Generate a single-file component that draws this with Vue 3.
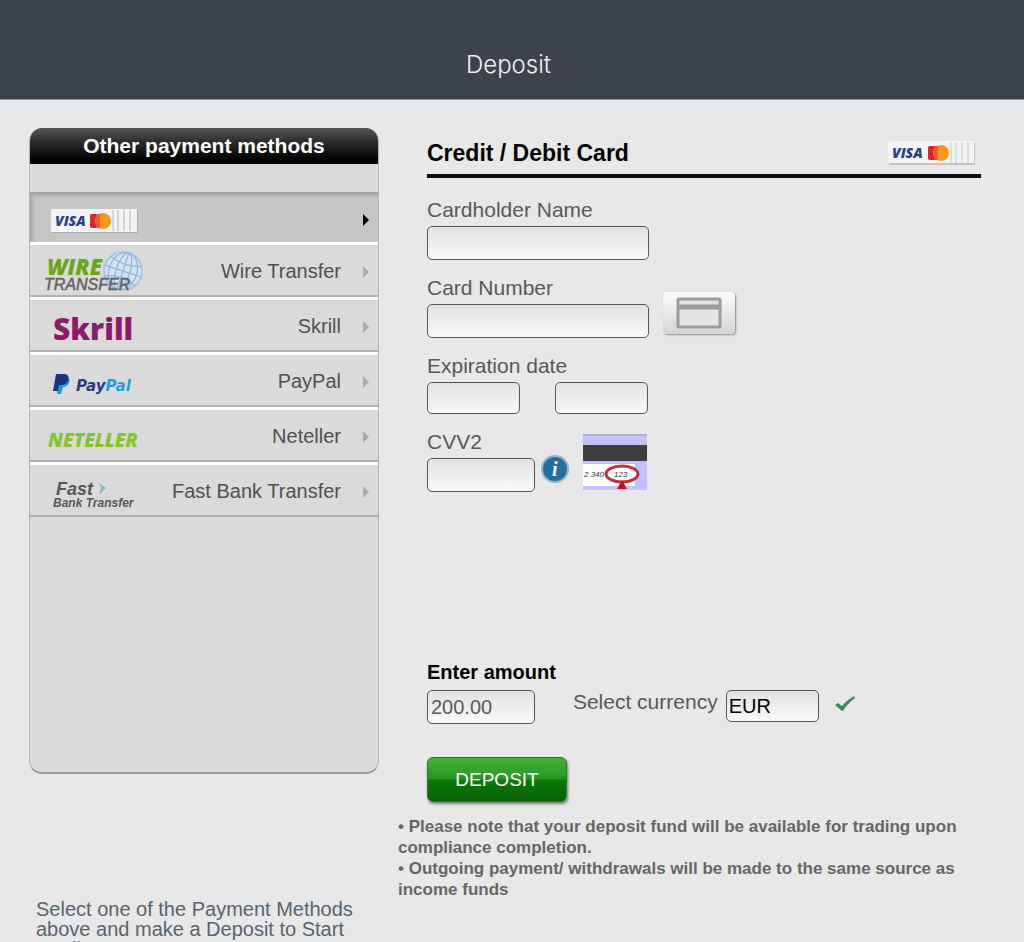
<template>
  <div class="deposit-page">
    <header class="top-bar">
      <h1>Deposit</h1>
    </header>

    <div class="content">
      <aside class="sidebar">
        <nav class="methods" aria-label="Other payment methods">
          <h2>Other payment methods</h2>
          <ul>
            <li v-for="m in methods" :key="m.id">
              <button
                type="button"
                class="method"
                :class="{ active: m.id === selected }"
                :aria-label="m.name"
                @click="selected = m.id"
              >
                <!-- Visa / Mastercard -->
                <svg v-if="m.id === 'card'" class="logo" width="106" height="44" viewBox="0 0 106 44">
                  <rect x="8" y="12" width="86" height="23" rx="1" fill="#8c8c8c" opacity=".5" />
                  <rect x="7" y="11" width="86" height="23" rx="1" fill="#f3f4f6" />
                  <text x="11" y="28" class="visa">VISA</text>
                  <rect x="46" y="16" width="9" height="14" rx="2" fill="#e3202c" />
                  <circle cx="59" cy="23" r="8" fill="#f7981d" />
                  <path d="M52 16h4v14h-4z" fill="#ee5a25" />
                  <path d="M69 12v21M74 12v21M80 12v21M86 12v21" stroke="#d6d6d6" stroke-width="2" />
                </svg>

                <svg v-else-if="m.id === 'wire'" class="logo" width="106" height="44" viewBox="0 0 106 44">
                  <circle cx="79" cy="21" r="19" fill="#d3e2f3" stroke="#a9c6e6" stroke-width="2" />
                  <g fill="none" stroke="#8fb5de" stroke-width="1.3" transform="rotate(18 79 21)">
                    <ellipse cx="79" cy="21" rx="7" ry="19" />
                    <ellipse cx="79" cy="21" rx="14" ry="19" />
                    <path d="M79 2v38M60 21h38M63 11q16 6 32 0M63 31q16-6 32 0" />
                  </g>
                  <text x="3" y="25" class="wire">WIRE</text>
                  <text x="0" y="40" class="wire-sub">TRANSFER</text>
                </svg>

                <svg v-else-if="m.id === 'skrill'" class="logo" width="106" height="44" viewBox="0 0 106 44">
                  <text x="9" y="35" class="skrill">Skrill</text>
                </svg>

                <svg v-else-if="m.id === 'paypal'" class="logo" width="106" height="44" viewBox="0 0 106 44">
                  <path d="M15 17h8q4 1 2 6-2 4-6 4l-2 7h-4z" fill="#1b9ad6" />
                  <path d="M12 14h9q5 1 3 7-2 4-7 4h-2l-1 6H9z" fill="#1c3580" />
                  <text x="32" y="31" class="paypal"><tspan fill="#263c86">Pay</tspan><tspan fill="#229ed8">Pal</tspan></text>
                </svg>

                <svg v-else-if="m.id === 'neteller'" class="logo" width="106" height="44" viewBox="0 0 106 44">
                  <text x="4" y="32" class="neteller">NETELLER</text>
                </svg>

                <svg v-else class="logo" width="106" height="44" viewBox="0 0 106 44">
                  <path d="M55 13l7 5-7 7 2-7z" fill="#8fb6c0" />
                  <text x="12" y="25" class="fast">Fast</text>
                  <text x="9" y="37" class="fast-sub">Bank Transfer</text>
                </svg>

                <span class="name">{{ m.label }}</span>
                <svg class="arrow" width="8" height="12" viewBox="0 0 8 12"><path d="M1 0l6 6-6 6z" /></svg>
              </button>
            </li>
          </ul>
        </nav>
        <p class="hint">Select one of the Payment Methods above and make a Deposit to Start Trading</p>
      </aside>

      <main class="main">
        <form class="form" @submit.prevent>
          <div class="form-title">
            <h2>Credit / Debit Card</h2>
            <svg width="90" height="26" viewBox="0 0 90 26" role="img" aria-label="Visa, Mastercard">
              <rect x="1" y="3" width="86" height="22" rx="1" fill="#c4c4c4" />
              <rect x="0" y="1" width="86" height="22" rx="1" fill="#f3f4f6" />
              <text x="4" y="18" class="visa">VISA</text>
              <rect x="40" y="6" width="9" height="14" rx="2" fill="#e3202c" />
              <circle cx="53" cy="13" r="8" fill="#f7981d" />
              <path d="M46 6h4v14h-4z" fill="#ee5a25" />
              <path d="M63 2v21M68 2v21M74 2v21M80 2v21" stroke="#dedede" stroke-width="2" />
            </svg>
          </div>

          <div class="field">
            <label for="holder">Cardholder Name</label>
            <input id="holder" v-model="form.holder" type="text" class="wide" />
          </div>

          <div class="row">
            <div class="field">
              <label for="number">Card Number</label>
              <input id="number" v-model="form.number" type="text" class="wide" />
            </div>
            <button type="button" class="card-btn" aria-label="Card">
              <svg width="46" height="32" viewBox="0 0 46 32">
                <rect x="2" y="2" width="42" height="28" rx="1" fill="#e4e4e4" stroke="#9b9b9b" stroke-width="3" />
                <path d="M2 10h42" stroke="#9b9b9b" stroke-width="5" />
              </svg>
            </button>
          </div>

          <div class="field">
            <label for="month">Expiration date</label>
            <div class="dates">
              <select id="month" v-model="form.month">
                <option value=""></option>
                <option v-for="n in 12" :key="n">{{ n }}</option>
              </select>
              <select v-model="form.year" aria-label="Expiration year">
                <option value=""></option>
                <option v-for="n in 10" :key="n">{{ 2019 + n }}</option>
              </select>
            </div>
          </div>

          <div class="row">
            <div class="field">
              <label for="cvv">CVV2</label>
              <input id="cvv" v-model="form.cvv" type="text" class="short" />
            </div>
            <svg class="info" width="28" height="28" viewBox="0 0 28 28">
              <circle cx="14" cy="14" r="13" fill="#246f9f" stroke="#8fb5cc" stroke-width="2" />
              <text x="11" y="21" class="info-text">i</text>
            </svg>
            <svg class="card-back" width="64" height="56" viewBox="0 0 64 56">
              <rect width="64" height="56" fill="#c3c1fb" />
              <path d="M0 0h64v2H0z" fill="#aeb0d2" />
              <path d="M0 11h64v16H0z" fill="#3b3c3e" />
              <path d="M0 30h52v22H0z" fill="#fff" />
              <text x="1" y="43" class="digits">2 340</text>
              <ellipse cx="39" cy="40" rx="16" ry="8" fill="#fff" stroke="#c22f3f" stroke-width="3" />
              <text x="31" y="43" class="digits">123</text>
              <path d="M39 46l5 9H34z" fill="#c11222" />
            </svg>
          </div>

          <div class="row amount-row">
            <div class="field">
              <label for="amount" class="strong">Enter amount</label>
              <input id="amount" v-model="form.amount" type="text" class="short" />
            </div>
            <div class="currency">
              <label for="currency">Select currency</label>
              <select id="currency" v-model="form.currency">
                <option>EUR</option>
                <option>USD</option>
                <option>GBP</option>
              </select>
              <svg class="check" width="20" height="16" viewBox="0 0 20 16">
                <path d="M0 9l3-2 4 3Q12 4 19 0l1 2Q12 8 8 15H7z" fill="#3d8a58" />
              </svg>
            </div>
          </div>

          <button type="submit" class="submit">DEPOSIT</button>
        </form>

        <div class="notes">
          <p>• Please note that your deposit fund will be available for trading upon compliance completion.</p>
          <p>• Outgoing payment/ withdrawals will be made to the same source as income funds</p>
        </div>
      </main>
    </div>
  </div>
</template>

<script setup>
import { ref, reactive } from 'vue'

const methods = [
  { id: 'card', name: 'Credit / Debit Card', label: '' },
  { id: 'wire', name: 'Wire Transfer', label: 'Wire Transfer' },
  { id: 'skrill', name: 'Skrill', label: 'Skrill' },
  { id: 'paypal', name: 'PayPal', label: 'PayPal' },
  { id: 'neteller', name: 'Neteller', label: 'Neteller' },
  { id: 'fast', name: 'Fast Bank Transfer', label: 'Fast Bank Transfer' },
]

const selected = ref('card')

const form = reactive({
  holder: '',
  number: '',
  month: '',
  year: '',
  cvv: '',
  amount: '200.00',
  currency: 'EUR',
})
</script>

<style>
body { margin: 0; background: #e8e8e8; }
</style>

<style scoped>
.deposit-page { font-family: "Liberation Sans", Arial, sans-serif; color: #58585a; background: #e8e8e8; }
h1, h2, p, ul { margin: 0; padding: 0; }
button, input, select { font-family: inherit; box-sizing: border-box; margin: 0; }

.top-bar {
  box-sizing: border-box; height: 100px; padding: 30px 7px 0 0;
  display: flex; align-items: center; justify-content: center;
  background: #3c434b; border-bottom: 1px solid #8d9095;
}
.top-bar h1 { font-family: Inter, sans-serif; font-size: 24px; line-height: 28px; font-weight: 300; color: #f0f1f2; }

.content {
  display: flex; align-items: flex-start; gap: 19px;
  padding: 28px 43px 0 29px;
  background: linear-gradient(#e5e8ed 10px, #e8e8e8 20px);
}

/* sidebar */
.sidebar { flex: 0 0 350px; }
.methods {
  box-sizing: border-box; min-height: 646px; overflow: hidden;
  background: #dadada; border: 1px solid #b4b4b4; border-bottom: 2px solid #999; border-top: 0; border-radius: 13px;
}
.methods h2 {
  height: 36px; margin-bottom: 28px;
  font-size: 21px; line-height: 36px; color: #fff; text-align: center;
  background: linear-gradient(#555, #2b2b2b 40%, #000 90%);
}
.methods ul { list-style: none; }
.method {
  width: 100%; height: 55px; padding: 4px 8px 0 14px;
  display: flex; align-items: center;
  background: #dadada; border: 0; border-top: 3px solid #fff; border-bottom: 2px solid #b0b0b0;
  color: #505052; font-size: 20px; cursor: pointer;
}
.method.active {
  height: 50px; background: #c6c6c6; border-top: 2px solid #a3a3a3; border-bottom: 0;
  box-shadow: inset 4px 3px 3px -1px #adadad;
}
.logo { flex: none; overflow: visible; }
.name { flex: 1; text-align: right; line-height: 24px; padding-bottom: 2px; }
.arrow { flex: none; margin-left: 21px; fill: #aaa; }
.active .arrow { fill: #000; }

.visa { font: italic 800 14px "Open Sans", sans-serif; fill: #2b3f88; }
.wire { font: italic 800 22px "Open Sans", sans-serif; fill: #69a61c; }
.wire-sub { font: italic 16px "Liberation Sans", sans-serif; fill: #606366; stroke: #606366; stroke-width: .5; }
.skrill { font: 800 30px "Open Sans", sans-serif; fill: #8f1a6b; }
.paypal { font: italic 700 15px "DejaVu Sans", sans-serif; }
.neteller { font: italic 800 19px "Open Sans", sans-serif; fill: #86c52f; }
.fast { font: italic 700 18px "Liberation Sans", sans-serif; fill: #55585a; }
.fast-sub { font: italic 700 12px "Liberation Sans", sans-serif; fill: #55585a; }

.hint { margin-top: 125px; padding: 0 7px; font-size: 20px; line-height: 20px; color: #56646f; }

/* form */
.main { flex: 1; min-width: 0; }
.form { padding-left: 29px; }
.form-title {
  display: flex; align-items: center; justify-content: space-between;
  box-sizing: border-box; height: 50px; padding: 4px 3px 0 0; margin-bottom: 20px;
  border-bottom: 4px solid #111;
}
.form-title h2 { font-size: 23px; line-height: 28px; color: #000; }

.row { display: flex; align-items: flex-end; }
.field { display: flex; flex-direction: column; margin-bottom: 16px; }
label { font-size: 21px; line-height: 24px; margin-bottom: 4px; }
.strong { font-size: 20px; line-height: 20px; margin-bottom: 8px; font-weight: 700; color: #000; }
input, select {
  height: 34px; padding: 0 3px; font-size: 20px; color: #5a5a5a;
  border: 1px solid #555; border-radius: 5px; background: linear-gradient(#e2e2e2, #f9f9f9);
}
select { appearance: none; width: 93px; height: 32px; padding: 0 2px; color: #000; }
.wide { width: 222px; }
.short { width: 108px; }
.dates { display: flex; gap: 35px; }

.card-btn {
  display: flex; align-items: center; justify-content: center;
  width: 72px; height: 42px; margin: 0 0 20px 14px; padding: 0;
  background: linear-gradient(#fdfdfd, #d4d4d4); border: 0; border-radius: 4px;
  box-shadow: 1px 1px 2px #888; cursor: pointer;
}
.info { margin: 0 14px 25px 6px; }
.info-text { font: italic 700 20px "Liberation Serif", serif; fill: #fff; }
.card-back { margin-bottom: 18px; }
.digits { font: italic 8px "Liberation Sans", sans-serif; fill: #333; }

.amount-row { margin-top: 154px; }
.amount-row .field { margin-bottom: 0; }
.currency { display: flex; align-items: flex-start; height: 34px; margin-left: 17px; }
.currency select { margin-left: 8px; }
.check { margin: 6px 0 0 16px; }

.submit {
  display: block; width: 140px; height: 45px; margin-top: 33px;
  font-size: 19px; color: #fff; cursor: pointer;
  background: linear-gradient(#45b03b, #27961f 48%, #0a7a06 52%, #046003);
  border: 1px solid #2a7a26; border-radius: 6px;
  box-shadow: 1px 2px 3px #777;
}

.notes { margin-top: 14px; font-size: 17px; line-height: 21px; font-weight: 700; color: #666; }
</style>
